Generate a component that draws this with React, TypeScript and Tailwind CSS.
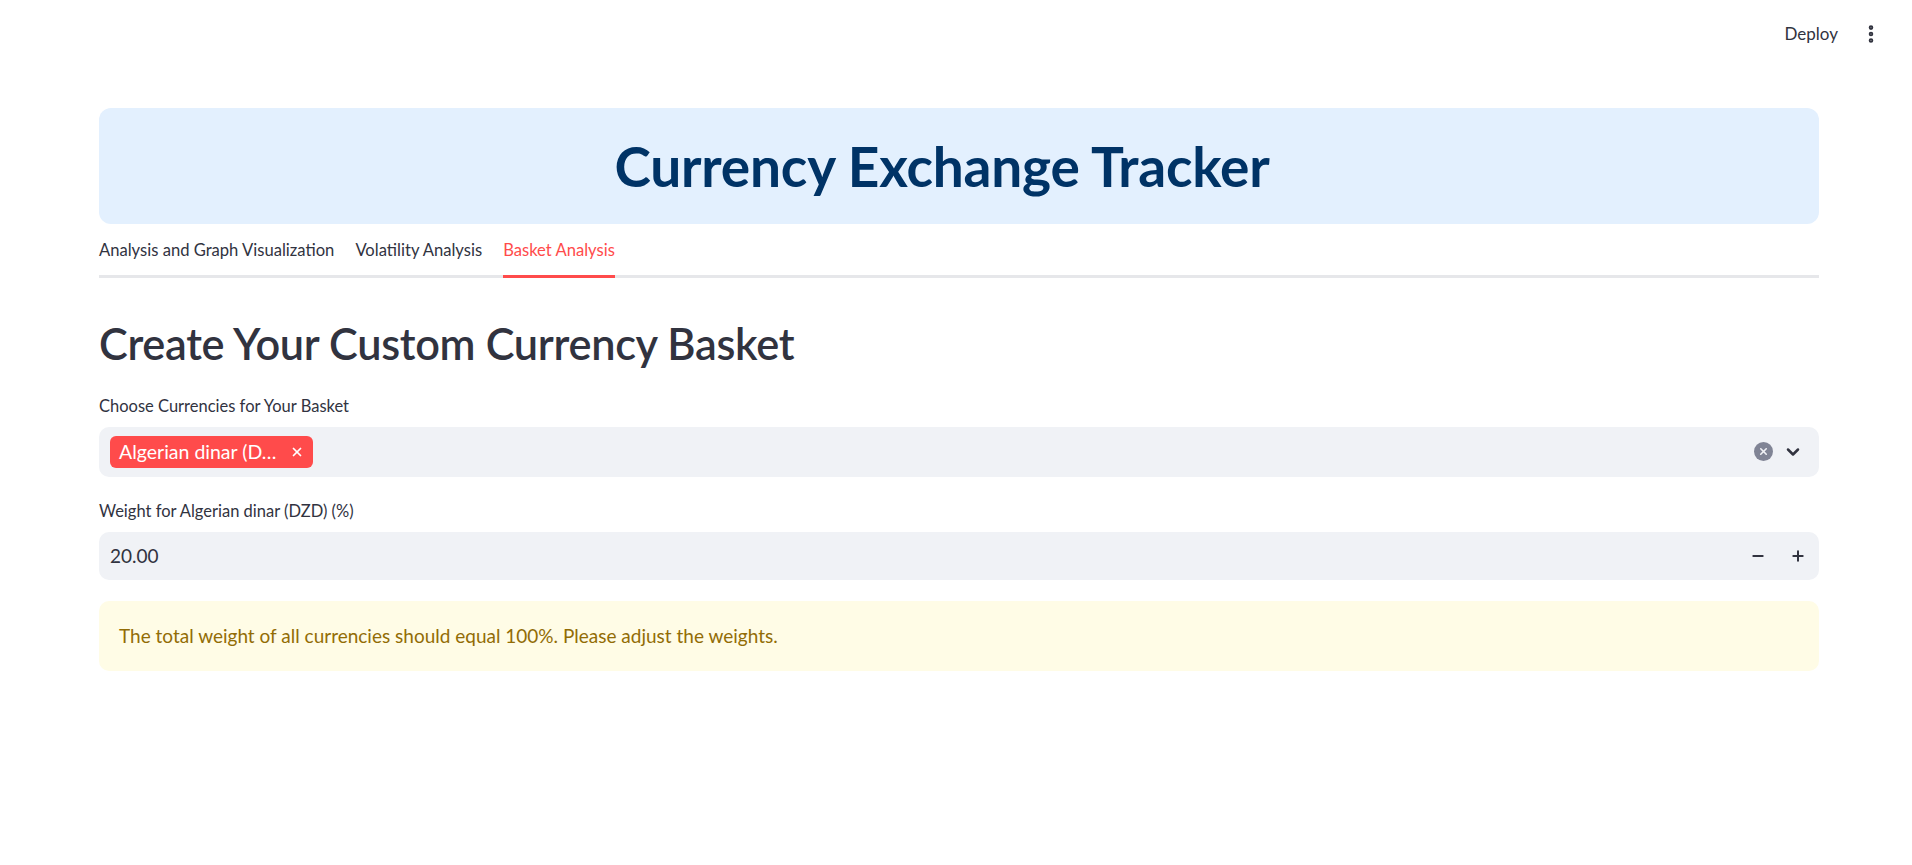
import { X, ChevronDown, Minus, Plus, EllipsisVertical } from 'lucide-react';

const tabs = ['Analysis and Graph Visualization', 'Volatility Analysis', 'Basket Analysis'];

export default function App() {
  const active = 2;

  return (
    <div className="min-h-screen bg-white text-[#31333f] font-['Lato','Noto_Sans',sans-serif]">
      {/* top bar */}
      <div className="flex h-[68px] items-center justify-end gap-[22px] pr-[30px]">
        <span className="text-[17px] text-[#31333f]">Deploy</span>
        <EllipsisVertical className="h-[22px] w-[22px] text-[#31333f]" strokeWidth={3} />
      </div>

      <div className="pl-[99px] pr-[93px] pt-[40px]">
        {/* banner */}
        <div className="flex h-[116px] items-center justify-center rounded-[12px] bg-[#e3f0fe] pr-[34px]">
          <h1 className="text-[55px] font-bold tracking-[-0.2px] text-[#003366]">Currency Exchange Tracker</h1>
        </div>

        {/* tabs */}
        <div className="mt-[8px] flex gap-[21px] border-b-[3px] border-[#e6e7ea]">
          {tabs.map((t, i) => (
            <div
              key={t}
              className={
                i === active
                  ? '-mb-[3px] border-b-[3px] border-[#ff4b4b] pb-[12px] pt-[6px] text-[16.6px] text-[#ff4b4b]'
                  : 'pb-[12px] pt-[6px] text-[16.6px] text-[#31333f]'
              }
            >
              {t}
            </div>
          ))}
        </div>

        <h2 className="mt-[40px] text-[43.3px] font-semibold leading-[1.2] tracking-[-0.3px]">
          Create Your Custom Currency Basket
        </h2>

        {/* multiselect */}
        <label className="mt-[24px] block text-[16.5px]">Choose Currencies for Your Basket</label>
        <div className="mt-[8px] flex h-[50px] items-center rounded-[10px] bg-[#f0f2f6] pl-[11px] pr-[16px]">
          <div className="flex h-[32px] items-center gap-[14px] rounded-[6px] bg-[#ff4b4b] px-[9px] text-white">
            <span className="text-[19.5px]">Algerian dinar (D…</span>
            <X className="h-[14px] w-[14px]" strokeWidth={3} />
          </div>
          <div className="flex-1" />
          <div className="flex h-[19px] w-[19px] items-center justify-center rounded-full bg-[#808495]">
            <X className="h-[11px] w-[11px] text-[#f0f2f6]" strokeWidth={3.5} />
          </div>
          <ChevronDown className="ml-[10px] h-[20px] w-[20px] text-[#31333f]" strokeWidth={3} />
        </div>

        {/* number input */}
        <label className="mt-[22px] block text-[16.5px]">Weight for Algerian dinar (DZD) (%)</label>
        <div className="mt-[9px] flex h-[48px] items-center rounded-[10px] bg-[#f0f2f6] pl-[11px] pr-[13px]">
          <span className="flex-1 text-[19px]">20.00</span>
          <Minus className="h-[16px] w-[16px] text-[#31333f]" strokeWidth={3} />
          <Plus className="ml-[24px] h-[16px] w-[16px] text-[#31333f]" strokeWidth={3} />
        </div>

        {/* warning */}
        <div className="mt-[21px] flex h-[70px] items-center rounded-[10px] bg-[#fffce6] px-[20px] text-[19px] text-[#926c05]">
          The total weight of all currencies should equal 100%. Please adjust the weights.
        </div>
      </div>
    </div>
  );
}
